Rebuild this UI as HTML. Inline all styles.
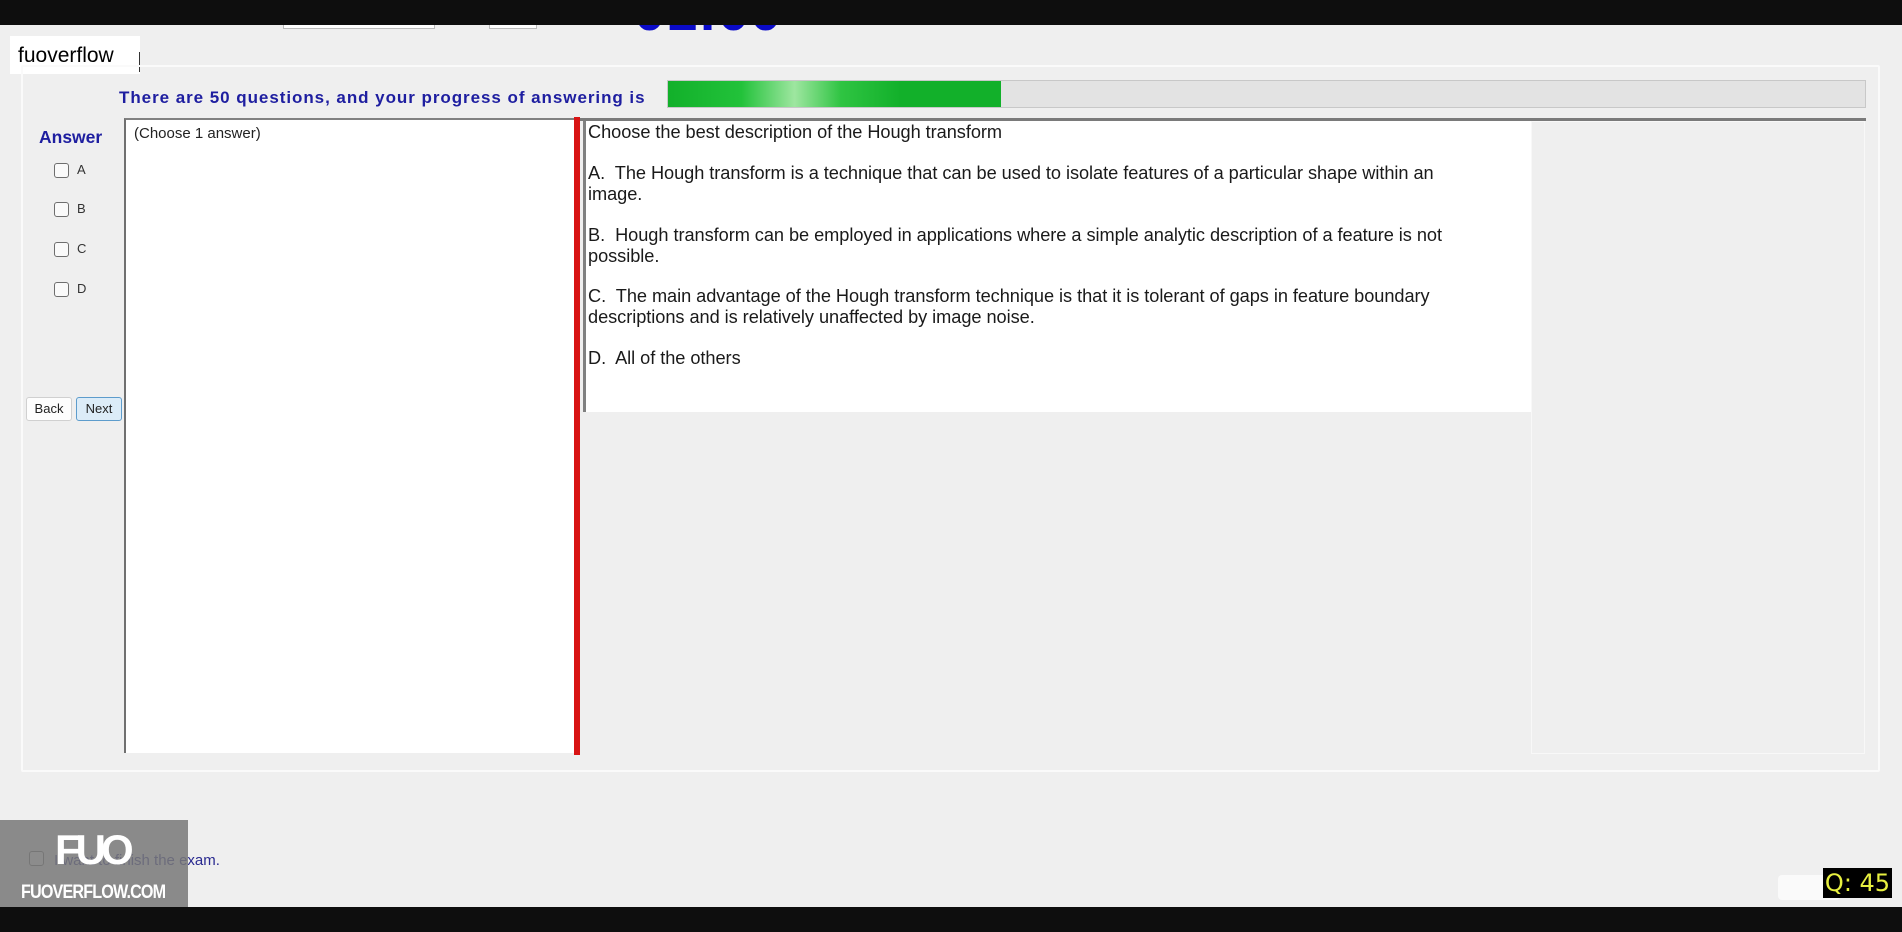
<!DOCTYPE html>
<html><head><meta charset="utf-8"><style>
*{margin:0;padding:0;box-sizing:border-box}
body{width:1902px;height:932px;background:#efefef;position:relative;overflow:hidden;font-family:"Liberation Sans",Arial,sans-serif}
.abs{position:absolute}
.cb{position:absolute;width:15px;height:15px;border:1px solid #6e6e6e;border-radius:3px;background:#fafafa}
.q{position:absolute;left:588px;font-size:18.2px;color:#1a1a1a;line-height:21px;white-space:nowrap;letter-spacing:-0.05px}
</style></head><body>
<div class="abs" style="left:0;top:0;width:1902px;height:25px;background:#0e0e0e;z-index:5"></div>
<div class="abs" style="left:283px;top:15px;width:152px;height:14px;background:#fff;border:1px solid #bbb"></div>
<div class="abs" style="left:489px;top:15px;width:48px;height:14px;background:#fff;border:1px solid #bbb"></div>
<div class="abs" style="left:634px;top:-17px;font-size:56px;font-weight:bold;color:#0a0ac8;line-height:56px;letter-spacing:1px">01:00</div>

<div class="abs" style="left:10px;top:36px;width:130px;height:38px;background:#fff"></div>
<div class="abs" style="left:18px;top:44px;font-size:21px;color:#000">fuoverflow</div>
<div class="abs" style="left:139px;top:52px;width:1px;height:20px;background:#333"></div>

<div class="abs" style="left:21px;top:65px;width:1859px;height:707px;border:2px solid #fafafa;border-radius:2px"></div>

<div class="abs" style="left:119px;top:88px;font-size:17px;font-weight:bold;color:#1e1ea0;letter-spacing:0.95px">There are 50 questions, and your progress of answering is</div>
<div class="abs" style="left:667px;top:80px;width:1199px;height:28px;background:#e3e3e3;border:1px solid #c8c8c8"></div>
<div class="abs" style="left:668px;top:81px;width:333px;height:26px;background:linear-gradient(90deg,#12b02a 0%,#22c23a 22%,#9ee6a0 38%,#2fc442 52%,#12b02a 70%,#12b02a 100%)"></div>

<div class="abs" style="left:39px;top:127px;font-size:17.5px;font-weight:bold;color:#1e1ea0">Answer</div>
<div class="cb" style="left:54px;top:163px"></div><div class="abs" style="left:77px;top:162px;font-size:13px;color:#333">A</div>
<div class="cb" style="left:54px;top:202px"></div><div class="abs" style="left:77px;top:201px;font-size:13px;color:#333">B</div>
<div class="cb" style="left:54px;top:242px"></div><div class="abs" style="left:77px;top:241px;font-size:13px;color:#333">C</div>
<div class="cb" style="left:54px;top:282px"></div><div class="abs" style="left:77px;top:281px;font-size:13px;color:#333">D</div>

<div class="abs" style="left:26px;top:397px;width:46px;height:24px;background:#fdfdfd;border:1px solid #d0d0d0;border-radius:3px;font-size:13px;color:#222;text-align:center;line-height:22px">Back</div>
<div class="abs" style="left:76px;top:397px;width:46px;height:24px;background:#dcecf8;border:1px solid #5d9ccc;border-radius:3px;font-size:13px;color:#222;text-align:center;line-height:22px">Next</div>

<div class="abs" style="left:124px;top:118px;width:454px;height:635px;background:#fff;border-left:2px solid #707070;border-top:2px solid #808080"></div>
<div class="abs" style="left:134px;top:125px;font-size:15px;color:#222">(Choose 1 answer)</div>
<div class="abs" style="left:574px;top:117px;width:6px;height:638px;background:#d81414"></div>

<div class="abs" style="left:580px;top:118px;width:1286px;height:3px;background:#7a7a7a"></div>
<div class="abs" style="left:1531px;top:121px;width:334px;height:633px;border:1px solid #f8f8f8"></div>
<div class="abs" style="left:583px;top:121px;width:948px;height:291px;background:#fff;border-left:3px solid #808080"></div>
<div class="q" style="top:122px">Choose the best description of the Hough transform</div>
<div class="q" style="top:163px">A.&nbsp; The Hough transform is a technique that can be used to isolate features of a particular shape within an<br>image.</div>
<div class="q" style="top:225px">B.&nbsp; Hough transform can be employed in applications where a simple analytic description of a feature is not<br>possible.</div>
<div class="q" style="top:286px">C.&nbsp; The main advantage of the Hough transform technique is that it is tolerant of gaps in feature boundary<br>descriptions and is relatively unaffected by image noise.</div>
<div class="q" style="top:348px">D.&nbsp; All of the others</div>

<div class="cb" style="left:29px;top:851px"></div>
<div class="abs" style="left:54px;top:852px;font-size:15px;color:#2a2a90">I want to finish the exam.</div>
<div class="abs" style="left:0;top:820px;width:188px;height:88px;background:rgba(120,120,120,0.85)"></div>
<div class="abs" style="left:55px;top:829px;font-size:42px;font-weight:bold;color:#fff;letter-spacing:-5px;line-height:42px">FUO</div>
<div class="abs" style="left:21px;top:882px;font-size:19px;font-weight:bold;color:#fff;letter-spacing:-1px;transform:scaleX(0.85);transform-origin:left">FUOVERFLOW.COM</div>

<div class="abs" style="left:1778px;top:875px;width:62px;height:25px;background:#fafafa;border-radius:4px"></div>
<div class="abs" style="left:1823px;top:868px;width:69px;height:30px;background:#000;color:#e8f040;font-size:24px;line-height:30px;text-align:center;font-family:'DejaVu Sans',sans-serif">Q: 45</div>

<div class="abs" style="left:0;top:907px;width:1902px;height:25px;background:#0e0e0e"></div>
</body></html>
